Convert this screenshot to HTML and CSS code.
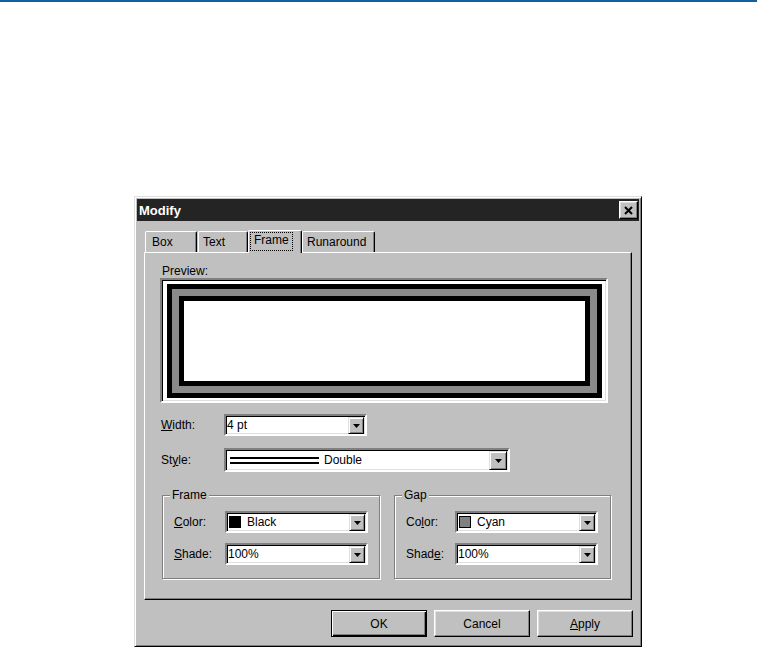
FILE: index.html
```html
<!DOCTYPE html>
<html lang="en">
<head>
    <meta charset="UTF-8">
    <title>Modify</title>
    <link rel="stylesheet" href="styles.css">
</head>
<body>
    <div class="topline"></div>
    <div class="dialog">
        <div class="titlebar">
            <span class="title">Modify</span>
            <div class="close-btn">
                <svg width="9" height="9" viewBox="0 0 9 9">
                    <path d="M1 1 L8 8 M8 1 L1 8" stroke="#000" stroke-width="2" fill="none"></path>
                </svg>
            </div>
        </div>
        <div class="tabs">
            <div class="tab tab-box">Box</div>
            <div class="tab tab-text">Text</div>
            <div class="tab tab-frame active"><span class="focus">Frame</span></div>
            <div class="tab tab-run">Runaround</div>
        </div>
        <div class="panel">
            <div class="preview-label">Preview:</div>
            <div class="preview">
                <div class="frame-outer">
                    <div class="frame-gap">
                        <div class="frame-inner"></div>
                    </div>
                </div>
            </div>

            <div class="row row-width">
                <span class="label"><u>W</u>idth:</span>
                <div class="combo combo-width">
                    <span class="combo-value">4 pt</span>
                    <div class="drop-btn">
                        <svg width="7" height="4" viewBox="0 0 7 4"><polygon points="0,0 7,0 3.5,4" fill="#000"></polygon></svg>
                    </div>
                </div>
            </div>

            <div class="row row-style">
                <span class="label">St<u>y</u>le:</span>
                <div class="combo combo-style">
                    <span class="combo-value">
                        <span class="double-line"></span>
                        Double
                    </span>
                    <div class="drop-btn">
                        <svg width="7" height="4" viewBox="0 0 7 4"><polygon points="0,0 7,0 3.5,4" fill="#000"></polygon></svg>
                    </div>
                </div>
            </div>

            <div class="groups">
                <fieldset class="group group-frame">
                    <legend>Frame</legend>
                    <div class="group-row">
                        <span class="label"><u>C</u>olor:</span>
                        <div class="combo">
                            <span class="combo-value"><span class="swatch black"></span>Black</span>
                            <div class="drop-btn">
                                <svg width="7" height="4" viewBox="0 0 7 4"><polygon points="0,0 7,0 3.5,4" fill="#000"></polygon></svg>
                            </div>
                        </div>
                    </div>
                    <div class="group-row">
                        <span class="label"><u>S</u>hade:</span>
                        <div class="combo">
                            <span class="combo-value">100%</span>
                            <div class="drop-btn">
                                <svg width="7" height="4" viewBox="0 0 7 4"><polygon points="0,0 7,0 3.5,4" fill="#000"></polygon></svg>
                            </div>
                        </div>
                    </div>
                </fieldset>

                <fieldset class="group group-gap">
                    <legend>Gap</legend>
                    <div class="group-row">
                        <span class="label">Co<u>l</u>or:</span>
                        <div class="combo">
                            <span class="combo-value"><span class="swatch gray"></span>Cyan</span>
                            <div class="drop-btn">
                                <svg width="7" height="4" viewBox="0 0 7 4"><polygon points="0,0 7,0 3.5,4" fill="#000"></polygon></svg>
                            </div>
                        </div>
                    </div>
                    <div class="group-row">
                        <span class="label">Shad<u>e</u>:</span>
                        <div class="combo">
                            <span class="combo-value">100%</span>
                            <div class="drop-btn">
                                <svg width="7" height="4" viewBox="0 0 7 4"><polygon points="0,0 7,0 3.5,4" fill="#000"></polygon></svg>
                            </div>
                        </div>
                    </div>
                </fieldset>
            </div>
        </div>

        <div class="buttons">
            <div class="btn default">OK</div>
            <div class="btn">Cancel</div>
            <div class="btn"><u>A</u>pply</div>
        </div>
    </div>
</body>
</html>
```

FILE: styles.css
```css
* {
    box-sizing: border-box;
}

body {
    margin: 0;
    background: #fff;
    font-family: "Liberation Sans", Arial, sans-serif;
    font-size: 12px;
    color: #000;
}

u {
    text-decoration: underline;
    text-underline-offset: 1px;
}

.topline {
    height: 2px;
    background: #14609f;
}

/* window */
.dialog {
    margin: 194px 0 0 134px;
    width: 508px;
    height: 451px;
    background: #c0c0c0;
    border: 1px solid;
    border-color: #dfdfdf #000 #000 #dfdfdf;
    box-shadow: inset 1px 1px #fff, inset -1px -1px #808080;
    padding: 2px;
    display: flex;
    flex-direction: column;
}

.titlebar {
    height: 22px;
    background: #242424;
    display: flex;
    align-items: center;
    justify-content: space-between;
    padding: 0 1px 0 2px;
    flex-shrink: 0;
}

.title {
    color: #fff;
    font-weight: bold;
    font-size: 13px;
}

.close-btn {
    width: 19px;
    height: 18px;
    background: #c0c0c0;
    border: 1px solid;
    border-color: #fff #000 #000 #fff;
    box-shadow: inset -1px -1px #808080, inset 1px 1px #dfdfdf;
    display: flex;
    align-items: center;
    justify-content: center;
}

/* tabs */
.tabs {
    margin-top: 9px;
    height: 22px;
    padding-left: 8px;
    display: flex;
    align-items: flex-end;
    flex-shrink: 0;
    position: relative;
    z-index: 1;
}

.tab {
    height: 21px;
    padding: 3px 0 0 6px;
    line-height: 14px;
    background: #c0c0c0;
    border-top: 1px solid #fff;
    border-left: 1px solid #fff;
    border-right: 1px solid #000;
    border-radius: 2px 2px 0 0;
    box-shadow: inset -1px 0 #808080;
}

.tab-box { width: 52px; margin-right: 1px; }
.tab-text { width: 50px; padding-left: 4px; }
.tab-frame { width: 54px; padding-left: 2px; }
.tab-run { width: 73px; padding-left: 4px; }

.tab.active {
    height: 23px;
    margin-bottom: -1px;
    padding-top: 2px;
}

.focus {
    display: inline-block;
    outline: 1px dotted #000;
    padding: 0 3px 2px;
    line-height: 15px;
}

/* tab page */
.panel {
    margin: 0 7px;
    height: 348px;
    flex-shrink: 0;
    border: 1px solid;
    border-color: #fff #000 #000 #fff;
    box-shadow: inset -1px -1px #808080;
    padding: 11px 0 0 15px;
}

.preview-label {
    line-height: 14px;
    margin-left: 2px;
}

.preview {
    width: 448px;
    height: 125px;
    background: #fff;
    border: 2px solid;
    border-color: #808080 #fff #fff #808080;
    box-shadow: inset 1px 1px #000, inset -1px -1px #dfdfdf;
    padding: 4px 4px 3px 5px;
}

.frame-outer {
    height: 100%;
    border: 5px solid #000;
    background: #8a8a8a;
    padding: 7px;
}

.frame-gap {
    height: 100%;
}

.frame-inner {
    height: 100%;
    border: 5px solid #000;
    background: #fff;
}

.row {
    display: flex;
    align-items: center;
}

.row-width {
    margin-top: 11px;
}

.row-style {
    margin-top: 12px;
}

.row .label {
    width: 64px;
    padding-left: 1px;
}

/* drop-down fields */
.combo {
    width: 143px;
    height: 22px;
    background: #fff;
    border: 2px solid;
    border-color: #808080 #fff #fff #808080;
    box-shadow: inset 1px 1px #000, inset -1px -1px #dfdfdf;
    display: flex;
    align-items: center;
    padding: 0 1px 0 1px;
}

.combo-style {
    width: 286px;
    height: 24px;
}

.combo-value {
    flex: 1;
    display: flex;
    align-items: center;
    white-space: nowrap;
}

.drop-btn {
    width: 16px;
    height: 17px;
    background: #c0c0c0;
    border: 1px solid;
    border-color: #dfdfdf #000 #000 #dfdfdf;
    box-shadow: inset 1px 1px #fff, inset -1px -1px #808080;
    display: flex;
    align-items: center;
    justify-content: center;
    padding-top: 1px;
}

.combo-style .drop-btn {
    width: 18px;
    height: 19px;
}

.double-line {
    width: 89px;
    height: 7px;
    margin: 0 5px 0 3px;
    border-top: 2px solid #000;
    border-bottom: 2px solid #000;
}

.swatch {
    width: 12px;
    height: 12px;
    margin: 0 6px 0 1px;
    border: 1px solid #000;
}

.swatch.black { background: #000; }
.swatch.gray { background: #808080; }

/* Frame / Gap group boxes */
.groups {
    display: flex;
    gap: 14px;
    margin: 16px 0 0 2px;
}

.group {
    margin: 0;
    min-width: 0;
    width: 218px;
    border: 1px solid #808080;
    box-shadow: inset 1px 1px #fff, 1px 1px #fff;
    padding: 9px 0 13px 11px;
}

.group-gap {
    width: 217px;
}

.group legend {
    padding: 0 2px;
    margin-left: -4px;
    line-height: 14px;
    background: #c0c0c0;
}

.group-row {
    display: flex;
    align-items: center;
}

.group-row + .group-row {
    margin-top: 10px;
}

.group-row .label {
    width: 51px;
}

.group-gap .group-row .label {
    width: 49px;
}

/* bottom buttons */
.buttons {
    margin: 10px 6px 0 0;
    display: flex;
    justify-content: flex-end;
    gap: 7px;
}

.btn {
    width: 96px;
    height: 27px;
    display: flex;
    align-items: center;
    justify-content: center;
    border: 1px solid;
    border-color: #fff #000 #000 #fff;
    box-shadow: inset -1px -1px #808080, inset 1px 1px #dfdfdf;
}

.btn.default {
    border: 1px solid #000;
    box-shadow: inset 1px 1px #fff, inset -1px -1px #000, inset -2px -2px #808080;
}
```
